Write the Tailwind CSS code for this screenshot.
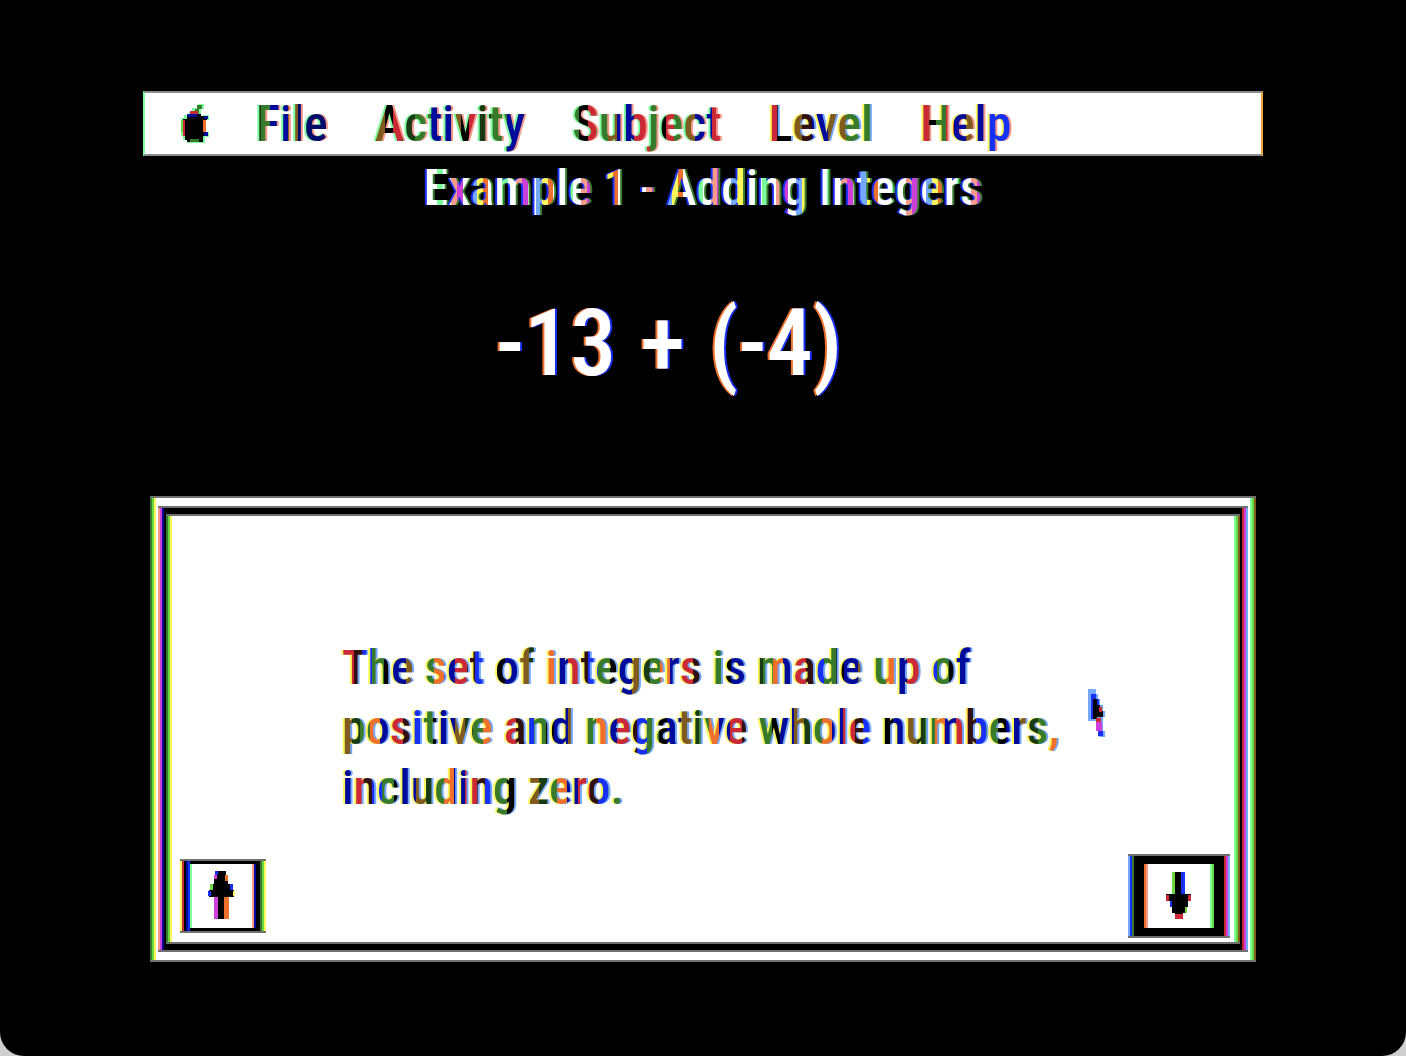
<!DOCTYPE html>
<html lang="en">

<head>
    <meta charset="UTF-8">
    <meta name="viewport" content="width=device-width, initial-scale=1.0">
    <title>Adding Integers</title>
    <script src="https://cdn.jsdelivr.net/npm/@tailwindcss/browser@4"></script>
</head>

<body class="bg-[#cfcfcf] font-['Roboto_Condensed','Liberation_Sans_Narrow',sans-serif] font-medium">

    <!-- Screen -->
    <main class="min-h-screen rounded-b-3xl bg-black px-4 pt-[91px] pb-[94px]">

        <!-- Menu bar -->
        <nav class="mx-auto flex h-[65px] max-w-[1120px] items-center gap-[47px] border-y-2 border-[#8c8c8c] border-l-2 border-l-[#7dff9d] border-r-2 border-r-[#f2a23a] bg-white pl-[34px] text-[50px] leading-[60px]">
            <button type="button" aria-label="Apple menu">
                <svg class="h-10 w-[30px]" viewBox="0 0 30 40" aria-hidden="true">
                    <path d="M16 4h3V0h6v5h-3v5h-6v3h8v-2h6v5h-5v12h5v5h-4v6H8v-3H4v-4H2V14h3v-3h5V8h3V4z" fill="#7dff9d" />
                    <path d="M18 1h5v4h-3v5h-4V5h2z" fill="#387a2b" />
                    <path d="M11 7h8v4h-8z" fill="#cc2936" />
                    <path d="M8 10h14v2h6v4h-4v12h4v4h-4v6H8v-2H6v-4H4V15h4z" fill="#000" />
                    <path d="M2 16h2v12H2z" fill="#68d943" />
                    <path d="M4 16h2v16H4z" fill="#cc2936" />
                    <path d="M8 10h10v3H8zM25 12h4v3h-4zM25 28h4v4h-4z" fill="#000b9c" />
                    <path d="M24 16h3v12h-3z" fill="#ee702c" />
                    <path d="M11 35h9v3h-9z" fill="#387a2b" />
                </svg>
            </button>
            <button type="button" class="bg-[repeating-linear-gradient(90deg,#183a14_0_5px,#387a2b_5px_14px,#000b9c_14px_32px,#805a1e_32px_42px,#000b6c_42px_70px)] bg-clip-text text-transparent [filter:drop-shadow(-2px_0_#7dff9d)_drop-shadow(2px_0_#f69a8c)]">File</button>
            <button type="button" class="bg-[repeating-linear-gradient(90deg,#805a1e_0_10px,#000_10px_18px,#cc2936_18px_27px,#183a14_27px_40px,#387a2b_40px_56px,#000b9c_56px_76px)] bg-clip-text text-transparent [filter:drop-shadow(-2px_0_#7dff9d)_drop-shadow(2px_0_#f69a8c)]">Activity</button>
            <button type="button" class="bg-[repeating-linear-gradient(90deg,#387a2b_0_7px,#000_7px_16px,#cc2936_16px_24px,#387a2b_24px_36px,#805a1e_36px_45px,#000b9c_45px_62px,#cc2936_62px_78px)] bg-clip-text text-transparent [filter:drop-shadow(-2px_0_#7dff9d)_drop-shadow(2px_0_#f69a8c)]">Subject</button>
            <button type="button" class="bg-[repeating-linear-gradient(90deg,#cc2936_0_9px,#000_9px_24px,#805a1e_24px_34px,#301010_34px_44px,#000b9c_44px_60px,#805a1e_60px_78px,#387a2b_78px_110px)] bg-clip-text text-transparent [filter:drop-shadow(-2px_0_#fff85a)_drop-shadow(2px_0_#75a9ff)]">Level</button>
            <button type="button" class="bg-[repeating-linear-gradient(90deg,#cc2936_0_9px,#000_9px_16px,#387a2b_16px_26px,#cc2936_26px_34px,#000b9c_34px_46px,#805a1e_46px_56px,#000b9c_56px_66px,#1830f5_66px_90px)] bg-clip-text text-transparent [filter:drop-shadow(-2px_0_#fff85a)_drop-shadow(2px_0_#f69a8c)]">Help</button>
        </nav>

        <!-- Problem -->
        <h1 class="text-center text-[50px] leading-[64px]">
            <span class="bg-[repeating-linear-gradient(90deg,#ffffff_0_14px,#7dff9d_14px_20px,#ffffff_20px_28px,#f69a8c_28px_34px,#cc3fd9_34px_40px,#ffffff_40px_48px,#75a9ff_48px_54px,#fff85a_54px_60px,#ee702c_60px_65px)] bg-clip-text text-transparent [filter:drop-shadow(-2px_0_#1830f5)_drop-shadow(2px_0_#387a2b)]">Example 1 - Adding Integers</span>
        </h1>
        <p class="mt-[60px] flex items-center justify-center gap-6 pr-[68px] text-[92px] leading-[128px] text-white [filter:drop-shadow(-2px_0_#ee702c)_drop-shadow(2px_0_#1830f5)]">
            <span>-13</span>
            <span>+</span>
            <span>(-4)</span>
        </p>

        <!-- Explanation box: three nested frames with coloured side fringes -->
        <section class="mx-auto mt-[88px] max-w-[1106px] border-y-2 border-[#707070] bg-[linear-gradient(90deg,#387a2b_0_2px,#68d943_2px_4px,#fff85a_4px_6px,#fff_6px_calc(100%-6px),#7dff9d_calc(100%-6px)_calc(100%-4px),#68d943_calc(100%-4px)_calc(100%-2px),#805a1e_calc(100%-2px))] p-2">
            <div class="border-y-2 border-[#707070] bg-[linear-gradient(90deg,#f69a8c_0_2px,#cc3fd9_2px_4px,#000b9c_4px_6px,#000_6px_calc(100%-6px),#cc2936_calc(100%-6px)_calc(100%-4px),#cc3fd9_calc(100%-4px)_calc(100%-2px),#75a9ff_calc(100%-2px))] px-2 py-[6px]">
                <div class="flex min-h-[430px] flex-col justify-between border-y-2 border-[#707070] bg-[linear-gradient(90deg,#387a2b_0_2px,#68d943_2px_4px,#fff85a_4px_6px,#fff_6px_calc(100%-6px),#7dff9d_calc(100%-6px)_calc(100%-4px),#68d943_calc(100%-4px)_calc(100%-2px),#805a1e_calc(100%-2px))] px-[6px] pb-1">
                    <div class="relative px-[170px] pt-[122px] text-[48px] leading-[60px] whitespace-nowrap">
                        <p class="[filter:drop-shadow(-2px_0_#fff85a)_drop-shadow(2px_0_#75a9ff)]">
                            <span class="bg-[repeating-linear-gradient(90deg,#cc2936_0_12px,#301010_12px_20px,#1830f5_20px_30px,#387a2b_30px_42px,#000_42px_50px,#000b9c_50px_64px,#805a1e_64px_74px,#183a14_74px_82px,#387a2b_82px_92px,#ee702c_92px_102px,#000b9c_102px_113px)] bg-clip-text text-transparent">The set of integers is made up of<br>positive and negative whole numbers,<br>including zero.</span>
                        </p>
                        <!-- Mouse pointer -->
                        <svg class="absolute top-[173px] right-[129px] h-12 w-[17px]" viewBox="0 0 17 48" aria-hidden="true">
                            <path d="M0 0h8v5h2v5h2v6h3v6h2v6h-2v14h2v6h-6v-6H8V32H0z" fill="#75a9ff" />
                            <path d="M3 5h5v5h3v8H7v12H3z" fill="#1830f5" />
                            <path d="M5 10h4v6h3v6h3v6H9v2H5z" fill="#000" />
                            <path d="M8 29h5v4H8zM11 18h3v5h-3z" fill="#cc2936" />
                            <path d="M8 33h6v9H8z" fill="#cc3fd9" />
                            <path d="M10 42h5v5h-5z" fill="#1830f5" />
                        </svg>
                    </div>
                    <!-- Paging -->
                    <div class="flex items-center justify-between px-1">
                        <button type="button" aria-label="Previous page" class="ml-[4px] border-y-2 border-[#707070] bg-[linear-gradient(90deg,#fff85a_0_2px,#cc2936_2px_4px,#000_4px_6px,#000b9c_6px_8px,#1830f5_8px_10px,#000_10px_calc(100%-6px),#387a2b_calc(100%-6px)_calc(100%-4px),#68d943_calc(100%-4px)_calc(100%-2px),#fff85a_calc(100%-2px))] px-[10px] py-[3px]">
                            <svg class="h-[64px] w-[66px] bg-white" viewBox="0 0 66 64" aria-hidden="true">
                                <path d="M0 0h2v64H0z" fill="#7dff9d" />
                                <path d="M62 0h2v64h-2z" fill="#f69a8c" />
                                <path d="M64 0h2v64h-2z" fill="#000b9c" />
                                <path d="M26 7h10v4h2v9h3v6h3v7h-6v22H25V33h-6v-7h3v-6h2v-9h2z" fill="#000" />
                                <path d="M24 33h4v22h-4zM24 11h3v4h-3z" fill="#cc3fd9" />
                                <path d="M34 33h5v22h-5zM35 11h3v6h-3z" fill="#ee702c" />
                                <path d="M18 27h3v5h-3zM40 20h3v6h-3zM25 7h3v4h-3z" fill="#1830f5" />
                                <path d="M20 20h3v6h-3z" fill="#68d943" />
                                <path d="M43 27h2v5h-2z" fill="#fff85a" />
                            </svg>
                        </button>
                        <button type="button" aria-label="Next page" class="border-y-2 border-[#707070] bg-[linear-gradient(90deg,#75a9ff_0_2px,#1830f5_2px_4px,#387a2b_4px_6px,#000_6px_calc(100%-6px),#cc2936_calc(100%-6px)_calc(100%-4px),#cc3fd9_calc(100%-4px)_calc(100%-2px),#75a9ff_calc(100%-2px))] px-4 py-2">
                            <svg class="h-[64px] w-[70px] bg-white" viewBox="0 0 70 64" aria-hidden="true">
                                <path d="M0 0h2v64H0z" fill="#ee702c" />
                                <path d="M2 0h2v64H2z" fill="#f69a8c" />
                                <path d="M66 0h2v64h-2z" fill="#7dff9d" />
                                <path d="M68 0h2v64h-2z" fill="#68d943" />
                                <path d="M30 8h11v22h6v7h-3v6h-2v6h-3v6h-8v-6h-3v-6h-2v-6h-4v-7h8z" fill="#000" />
                                <path d="M28 8h3v22h-3z" fill="#68d943" />
                                <path d="M37 8h4v22h-4zM26 37h2v6h-2z" fill="#1830f5" />
                                <path d="M22 31h3v6h-3zM44 31h3v6h-3zM31 50h8v5h-8z" fill="#cc2936" />
                                <path d="M41 43h2v6h-2z" fill="#68d943" />
                            </svg>
                        </button>
                    </div>
                </div>
            </div>
        </section>
    </main>
</body>

</html>
